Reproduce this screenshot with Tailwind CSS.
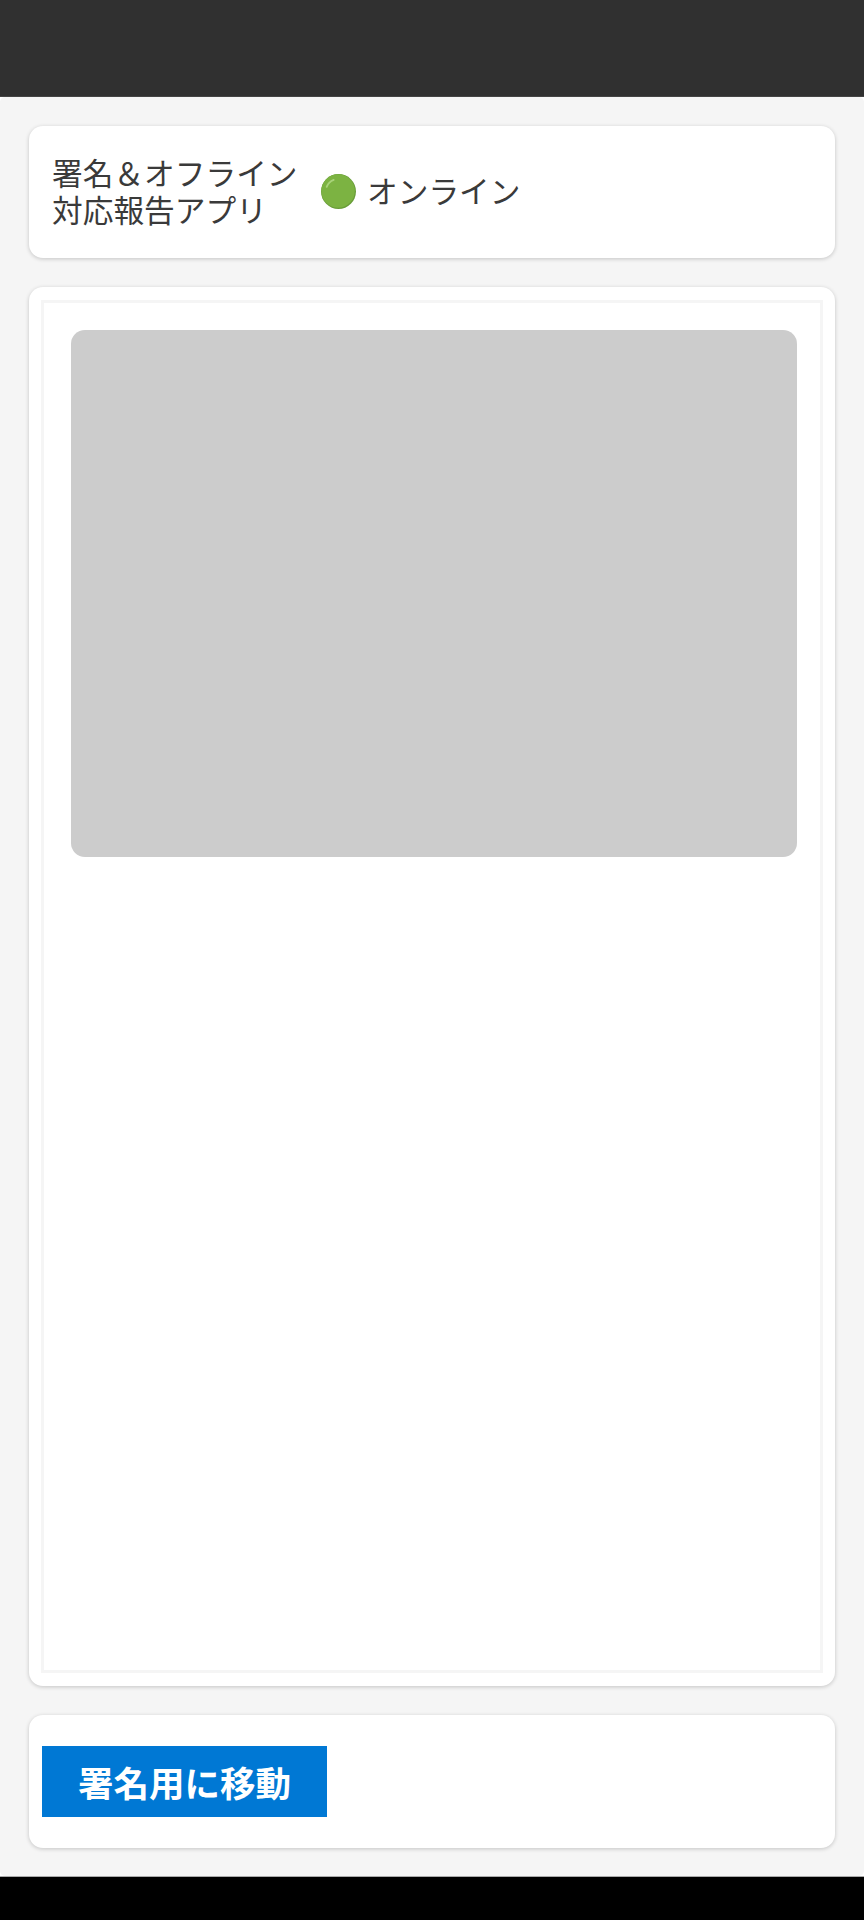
<!DOCTYPE html>
<html lang="ja">
<head>
  <meta charset="UTF-8">
  <meta name="viewport" content="width=device-width, initial-scale=1.0">
  <title>署名＆オフライン対応報告アプリ</title>
  <script src="https://cdn.jsdelivr.net/npm/@tailwindcss/browser@4"></script>
</head>
<body class="bg-black h-[1920px] overflow-hidden flex flex-col font-['Noto_Sans_CJK_JP','Noto_Sans',sans-serif] text-[#3a3a3a]">
  <!-- Top bar -->
  <div class="h-[97px] bg-[#303030] shrink-0 border-b border-[#444]"></div>

  <!-- white sits behind the rounded corners of the page -->
  <div class="h-[1780px] bg-white border-b border-[#aaa]">
    <div class="h-full bg-[#f5f5f5] rounded-[5px] px-[29px] pt-[29px] flex flex-col gap-[29px]">
      <!-- Title -->
      <div class="h-[132px] bg-white rounded-[14px] shadow-[0_1px_4px_rgba(0,0,0,0.2)] pl-[23px] flex items-center">
        <h1 class="w-[269px] text-[30.7px] leading-[36.7px] font-normal -mt-[3px]">署名＆オフライン<br>対応報告アプリ</h1>
        <div class="flex items-center text-[30.7px] ml-[-1px]">
          <svg class="w-[37px] h-[37px] mr-[10px]" viewBox="0 0 36 36">
            <circle cx="18" cy="18" r="17" fill="#689c38"/>
            <circle cx="17.6" cy="17.5" r="16.3" fill="#7cb342"/>
            <path d="M6.500 13.500c1.300-3.200 3.600-5.500 6.800-6.800" fill="none" stroke="#a9d37a" stroke-width="1.800" stroke-linecap="round"/>
          </svg>
          <span class="-mt-[3px]">オンライン</span>
        </div>
      </div>

      <!-- Preview -->
      <div class="h-[1399px] bg-white rounded-[14px] shadow-[0_1px_4px_rgba(0,0,0,0.2)] px-[12px] pt-[13px]">
        <div class="h-[1373px] border-[3px] border-[#f5f5f5] pl-[27px] pr-[23px] pt-[27px]">
          <div class="h-[527px] bg-[#ccc] rounded-[14px]"></div>
        </div>
      </div>

      <!-- Footer -->
      <div class="h-[133px] bg-white rounded-[14px] shadow-[0_1px_4px_rgba(0,0,0,0.2)] px-[13px] flex items-center">
        <button class="w-[285px] h-[71px] bg-[#0078d4] text-white text-[35.500px] font-bold">署名用に移動</button>
      </div>
    </div>
  </div>
</body>
</html>
